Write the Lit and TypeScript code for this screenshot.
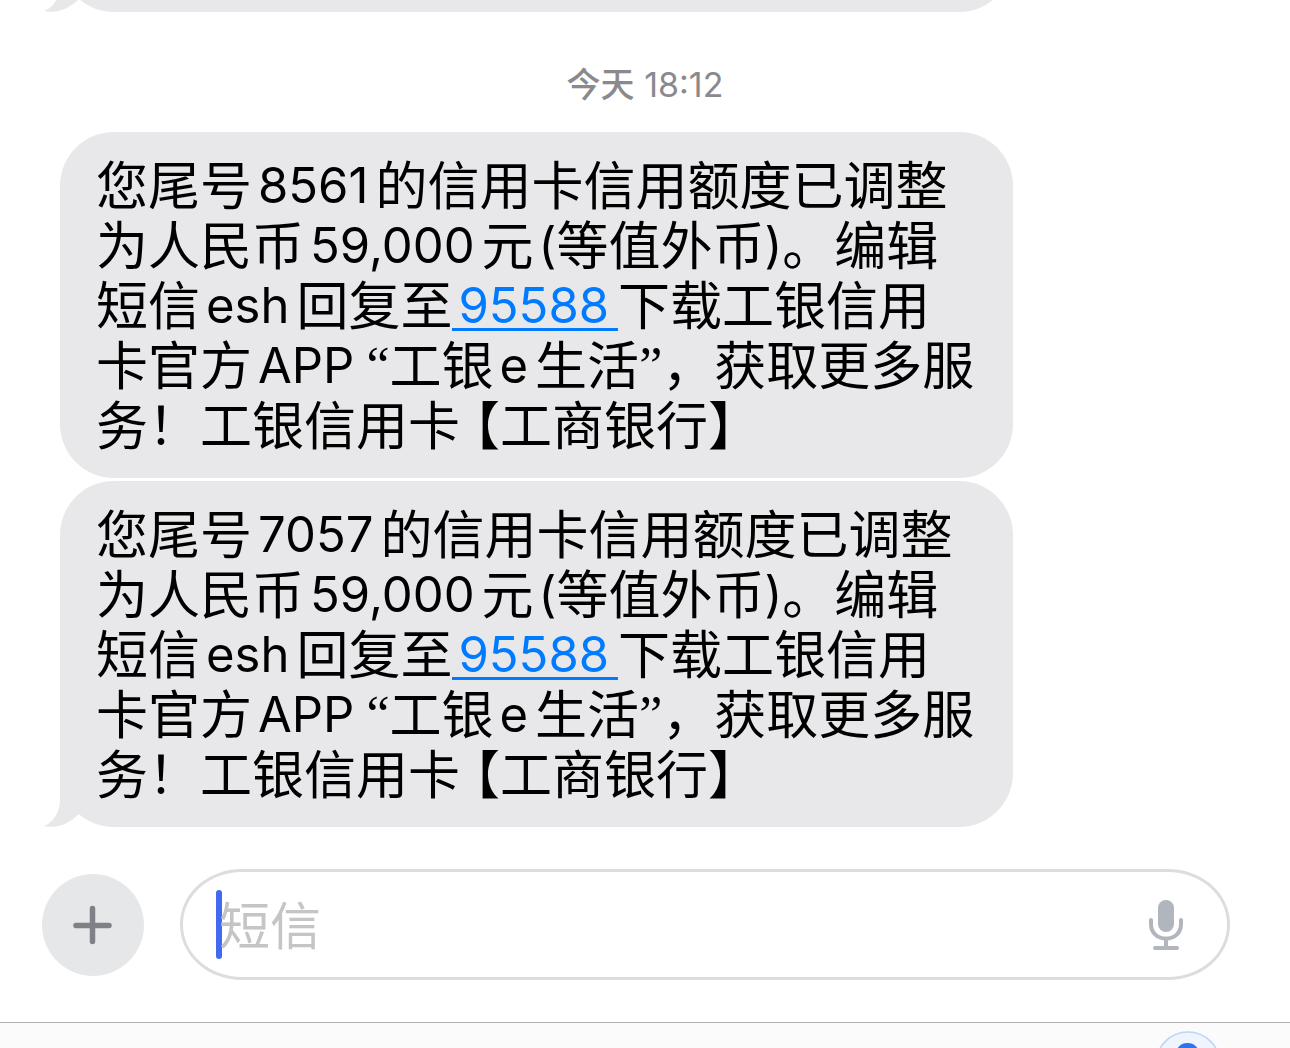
import { LitElement, html, css, svg } from "lit";
import { customElement, property } from "lit/decorators.js";

const tail = html`<svg class="tail" viewBox="0 0 36 60" aria-hidden="true">
  <path d="M16 0V33C16 45 9 56 0 59C12 62 25 57 35 47L36 0Z" fill="#e8e8ea" />
</svg>`;

@customElement("message-bubble")
export class MessageBubble extends LitElement {
  @property() card = "";
  @property({ type: Boolean }) last = false;

  static styles = css`
    :host {
      display: block;
    }
    .bubble {
      position: relative;
      margin: 0;
      padding: 25px 24px 21px 36px;
      border-radius: 54px;
      background: #e8e8ea;
      color: #000;
      font-family: "Liberation Sans", "Noto Sans CJK SC", sans-serif;
      font-size: 52px;
      line-height: 60px;
    }
    .line {
      display: block;
      white-space: nowrap;
    }
    .latin {
      font-family: Inter, "Liberation Sans", sans-serif;
      font-size: 49px;
      line-height: 1;
      vertical-align: 2px;
    }
    .spaced {
      margin: 0 7px 0 6px;
    }
    .quote {
      font-family: "Liberation Serif", serif;
      font-size: 52px;
      line-height: 1;
      vertical-align: 2px;
    }
    .before {
      margin-left: 5px;
    }
    .bracket {
      margin-left: 14px;
      font-feature-settings: "halt";
    }
    .link {
      padding: 0 9px 0 6px;
      color: #007aff;
      text-decoration: none;
      background: linear-gradient(#007aff, #007aff) 0 52px / 100% 3px no-repeat;
    }
    .tail {
      position: absolute;
      left: -16px;
      bottom: 0;
      width: 36px;
      height: 60px;
    }
  `;

  render() {
    return html`<p class="bubble">
      <span class="line">您尾号<span class="latin spaced">${this.card}</span>的信用卡信用额度已调整</span>
      <span class="line">为人民币<span class="latin spaced">59,000</span>元<span class="latin before">(</span>等值外币<span class="latin">)</span>。编辑</span>
      <span class="line">短信<span class="latin spaced">esh</span>回复至<a class="latin link" href="tel:95588">95588</a>下载工银信用</span>
      <span class="line">卡官方<span class="latin spaced">APP</span><span class="quote before">“</span>工银<span class="latin spaced">e</span>生活<span class="quote">”</span>，获取更多服</span>
      <span class="line">务！工银信用卡<span class="bracket">【</span>工商银行】</span>
      ${this.last ? tail : ""}
    </p>`;
  }
}

@customElement("message-composer")
export class MessageComposer extends LitElement {
  static styles = css`
    :host {
      display: block;
    }
    .composer {
      display: flex;
      align-items: center;
      gap: 36px;
      padding: 42px 60px 42px 42px;
    }
    button {
      border: 0;
      padding: 0;
      display: grid;
      place-items: center;
      background: none;
      flex: none;
    }
    .add {
      width: 102px;
      height: 102px;
      border-radius: 50%;
      background: #e6e7e9;
    }
    .add svg {
      width: 40px;
      height: 40px;
    }
    .field {
      flex: 1;
      min-width: 0;
      box-sizing: border-box;
      height: 111px;
      display: flex;
      align-items: center;
      padding: 0 43px 0 33px;
      border: 3px solid #dddddf;
      border-radius: 62px / 55px;
    }
    .caret {
      flex: none;
      width: 6px;
      height: 69px;
      border-radius: 3px;
      background: #416af0;
    }
    input {
      flex: 1;
      min-width: 0;
      height: 78px;
      box-sizing: border-box;
      margin: 0 0 0 -3px;
      padding: 4px 0 0;
      border: 0;
      outline: 0;
      background: none;
      font-family: Inter, "Noto Sans CJK SC", sans-serif;
      font-size: 51px;
      color: #000;
    }
    input::placeholder {
      color: #c5c5c7;
      opacity: 1;
    }
    .mic svg {
      width: 36px;
      height: 52px;
    }
  `;

  render() {
    return html`<form class="composer" @submit=${(e: Event) => e.preventDefault()}>
      <button class="add" type="button" aria-label="添加">
        <svg viewBox="0 0 40 40" fill="none" stroke="#808186" stroke-width="5.500" stroke-linecap="round">
          <path d="M19.500 3.500V36.500M3 20.500H36" />
        </svg>
      </button>
      <div class="field">
        <span class="caret"></span>
        <input type="text" placeholder="短信" aria-label="短信" />
        <button class="mic" type="button" aria-label="听写">
          <svg viewBox="0 0 36 52" fill="none">
            <rect x="10" y="1" width="16" height="32" rx="8" fill="#b1b5be" />
            <path d="M3 21V25C3 34 9.500 39.500 18 39.500S33 34 33 25V21M18 40V48M7 49H29" stroke="#b1b5be" stroke-width="4" stroke-linecap="round" />
          </svg>
        </button>
      </div>
    </form>`;
  }
}

@customElement("app-root")
export class AppRoot extends LitElement {
  static styles = css`
    :host {
      display: block;
      min-height: 100vh;
      overflow: hidden;
      background: #fff;
    }
    .thread {
      display: flex;
      flex-direction: column;
      padding: 0 60px;
    }
    .previous {
      display: flex;
      align-items: flex-end;
      height: 12px;
      margin-left: -16px;
      padding-left: 16px;
      max-width: 953px;
      overflow: hidden;
    }
    .shape {
      position: relative;
      flex: 1;
      height: 120px;
      border-radius: 54px;
      background: #e8e8ea;
    }
    .tail {
      position: absolute;
      left: -16px;
      bottom: 0;
      width: 36px;
      height: 60px;
    }
    .time {
      margin: 53px 0 27px;
      text-align: center;
      font-family: Inter, "Noto Sans CJK SC", sans-serif;
      font-size: 34px;
      line-height: 40px;
      color: #8a8a8e;
    }
    .day {
      font-weight: 500;
    }
    .messages {
      display: flex;
      flex-direction: column;
      gap: 3px;
      width: 100%;
      max-width: 953px;
    }
    .keyboard {
      display: flex;
      justify-content: flex-end;
      box-sizing: border-box;
      height: 26px;
      padding: 8px 69px 0 0;
      border-top: 1px solid #b0b0b3;
      background: #fbfbfc;
      overflow: hidden;
    }
    .voice {
      width: 66px;
      height: 66px;
      flex: none;
      padding: 0;
      border: 0;
      background: none;
    }
    .voice svg {
      display: block;
      width: 66px;
      height: 66px;
    }
  `;

  render() {
    return html`
      <main class="thread">
        <div class="previous"><div class="shape">${tail}</div></div>
        <p class="time"><span class="day">今天</span> <time>18:12</time></p>
        <div class="messages">
          <message-bubble card="8561"></message-bubble>
          <message-bubble card="7057" last></message-bubble>
        </div>
      </main>
      <message-composer></message-composer>
      <footer class="keyboard">
        <button class="voice" type="button" aria-label="语音输入">
          <svg viewBox="0 0 66 66">
            ${svg`<circle cx="33" cy="33" r="32" fill="#eff5fe" stroke="#bfd3f6" stroke-width="1.5" />
            <rect x="21" y="12" width="23" height="32" rx="11" fill="#2f73f2" />`}
          </svg>
        </button>
      </footer>
    `;
  }
}
